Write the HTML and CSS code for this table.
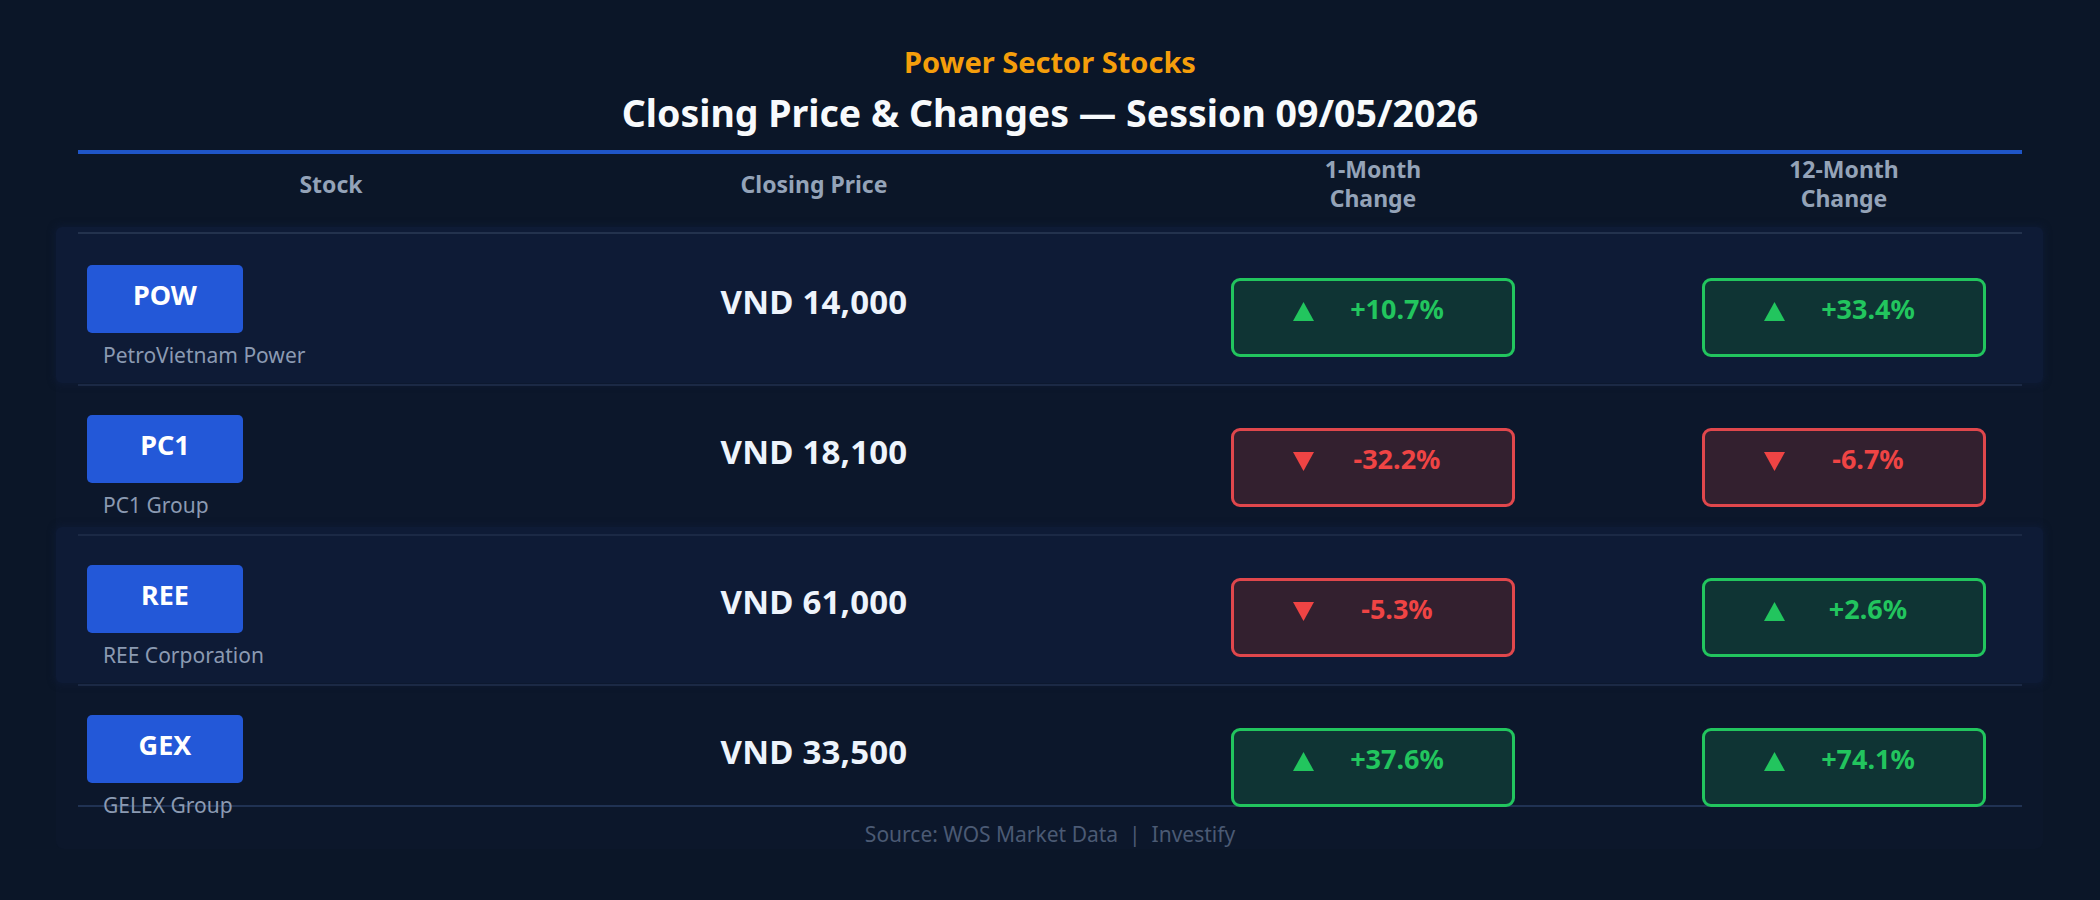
FILE: index.html
```html
<!DOCTYPE html>
<html lang="en">
<head>
<meta charset="utf-8">
<title>Power Sector Stocks</title>
<link rel="stylesheet" href="styles.css">
</head>
<body>
<main class="chart">
  <header class="titles">
    <div class="kicker">Power Sector Stocks</div>
    <h1 class="title">Closing Price &amp; Changes — Session 09/05/2026</h1>
  </header>

  <div class="thead">
    <div class="th">Stock</div>
    <div class="th">Closing Price</div>
    <div class="th">1-Month<br>Change</div>
    <div class="th">12-Month<br>Change</div>
  </div>

  <section class="panel">
    <div class="row alt">
      <div class="stock"><div class="badge">POW</div><div class="name">PetroVietnam Power</div></div>
      <div class="price">VND 14,000</div>
      <div class="chg"><div class="pill up"><span class="arrow"><svg viewBox="0 0 21 19"><polygon points="10.5,0 21,19 0,19"/></svg></span><span class="pct">+10.7%</span></div></div>
      <div class="chg"><div class="pill up"><span class="arrow"><svg viewBox="0 0 21 19"><polygon points="10.5,0 21,19 0,19"/></svg></span><span class="pct">+33.4%</span></div></div>
    </div>

    <div class="row">
      <div class="stock"><div class="badge">PC1</div><div class="name">PC1 Group</div></div>
      <div class="price">VND 18,100</div>
      <div class="chg"><div class="pill down"><span class="arrow"><svg viewBox="0 0 21 19"><polygon points="0,0 21,0 10.5,19"/></svg></span><span class="pct">-32.2%</span></div></div>
      <div class="chg"><div class="pill down"><span class="arrow"><svg viewBox="0 0 21 19"><polygon points="0,0 21,0 10.5,19"/></svg></span><span class="pct">-6.7%</span></div></div>
    </div>

    <div class="row alt">
      <div class="stock"><div class="badge">REE</div><div class="name">REE Corporation</div></div>
      <div class="price">VND 61,000</div>
      <div class="chg"><div class="pill down"><span class="arrow"><svg viewBox="0 0 21 19"><polygon points="0,0 21,0 10.5,19"/></svg></span><span class="pct">-5.3%</span></div></div>
      <div class="chg"><div class="pill up"><span class="arrow"><svg viewBox="0 0 21 19"><polygon points="10.5,0 21,19 0,19"/></svg></span><span class="pct">+2.6%</span></div></div>
    </div>

    <div class="row last">
      <div class="stock"><div class="badge">GEX</div><div class="name">GELEX Group</div></div>
      <div class="price">VND 33,500</div>
      <div class="chg"><div class="pill up"><span class="arrow"><svg viewBox="0 0 21 19"><polygon points="10.5,0 21,19 0,19"/></svg></span><span class="pct">+37.6%</span></div></div>
      <div class="chg"><div class="pill up"><span class="arrow"><svg viewBox="0 0 21 19"><polygon points="10.5,0 21,19 0,19"/></svg></span><span class="pct">+74.1%</span></div></div>
    </div>

    <footer class="source">Source: WOS Market Data &nbsp;|&nbsp; Investify</footer>
  </section>
</main>
</body>
</html>
```

FILE: styles.css
```css
html, body {
  margin: 0;
  padding: 0;
}

body {
  width: 2100px;
  height: 900px;
  overflow: hidden;
  background: #0b1628;
  font-family: "Noto Sans", "Open Sans", "DejaVu Sans", sans-serif;
}

.chart {
  padding-top: 44px;
}

.kicker {
  font-size: 29px;
  line-height: 36px;
  font-weight: 700;
  color: #f59e0b;
  text-align: center;
}

.title {
  margin: 11px 0 0;
  font-size: 37.5px;
  line-height: 44px;
  font-weight: 700;
  color: #f8fafc;
  text-align: center;
}

.thead,
.row {
  display: grid;
  grid-template-columns: 506px 460px 658px 284px;
}

.thead {
  position: relative;
  z-index: 1;
  width: 1944px;
  height: 60px;
  margin: 15px 0 0 78px;
  padding-bottom: 18px;
  align-items: center;
  border-top: 4px solid #1f55c7;
  border-bottom: 2px solid #23324d;
}

.th {
  text-align: center;
  font-size: 23px;
  line-height: 29px;
  font-weight: 700;
  color: #94a3b8;
}

.panel {
  position: relative;
  z-index: 0;
  width: 1944px;
  margin-left: 56px;
  padding: 2px 21px 0 22px;
  border-radius: 8px;
  background: #0c172b;
}

.row {
  position: relative;
  height: 148px;
  align-items: start;
  border-bottom: 2px solid #1b2945;
}

.row.last {
  height: 119px;
  border-bottom-color: #203253;
}

.row.alt::before {
  content: "";
  position: absolute;
  left: -22px;
  right: -21px;
  top: -9px;
  bottom: 1px;
  border-radius: 6px;
  background: #0e1b36;
  box-shadow: 0 0 6px 2px rgba(14, 27, 54, 0.7);
  z-index: -1;
}

.stock {
  padding: 29px 0 0 9px;
}

.badge {
  width: 156px;
  height: 68px;
  border-radius: 5px;
  background: #2358d8;
  color: #ffffff;
  font-size: 27px;
  line-height: 60px;
  font-weight: 700;
  text-align: center;
}

.name {
  margin: 9px 0 0 16px;
  font-size: 21px;
  line-height: 26px;
  color: #8b9ab2;
  white-space: nowrap;
}

.price {
  padding-top: 46px;
  text-align: center;
  font-size: 33px;
  line-height: 40px;
  font-weight: 700;
  letter-spacing: 0.2px;
  color: #eef4fc;
}

.chg {
  padding-top: 42px;
  display: flex;
  justify-content: center;
}

.pill {
  box-sizing: border-box;
  width: 284px;
  height: 79px;
  border: 3px solid;
  border-radius: 9px;
  display: flex;
  align-items: flex-start;
  padding: 12px 0 0 49px;
}

.pill.up {
  border-color: #22c55e;
  background: #0f3434;
  color: #22c55e;
}

.pill.down {
  border-color: #e0474c;
  background: #33202f;
  color: #ef4444;
}

.arrow {
  width: 40px;
  margin-top: 9px;
  display: flex;
  justify-content: center;
}

.arrow svg {
  display: block;
  width: 21px;
  height: 19px;
  fill: currentColor;
}

.pct {
  width: 120px;
  margin-left: 14px;
  text-align: center;
  font-size: 27px;
  line-height: 32px;
  font-weight: 700;
}

.source {
  margin-top: 14px;
  padding-bottom: 2px;
  text-align: center;
  font-size: 21px;
  line-height: 26px;
  color: #4b5a74;
}
```
